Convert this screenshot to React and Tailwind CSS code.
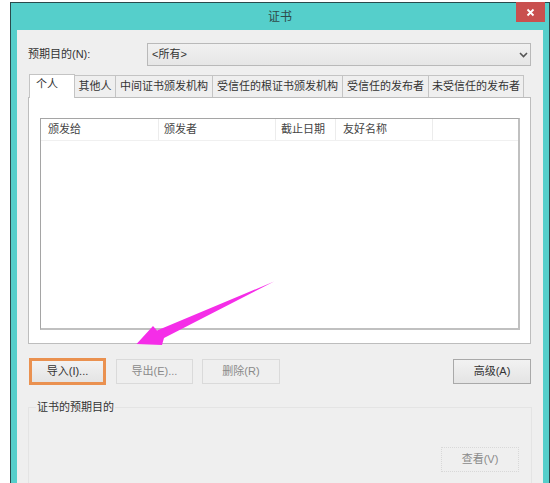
const font = { fontFamily: '"Liberation Sans", "Noto Sans CJK SC", sans-serif' };

const tabs = [
  { label: "其他人", width: "w-[42px]" },
  { label: "中间证书颁发机构", width: "w-[98px]" },
  { label: "受信任的根证书颁发机构", width: "w-[131px]" },
  { label: "受信任的发布者", width: "w-[87px]" },
  { label: "未受信任的发布者", width: "w-[96px]" },
];

const columns = [
  { label: "颁发给", className: "w-[118px] pl-[7px]" },
  { label: "颁发者", className: "w-[117px] pl-[5px]" },
  { label: "截止日期", className: "w-[60px] pl-[5px]" },
  { label: "友好名称", className: "w-[97px] pl-[7px]" },
];

function Button({ children, disabled, className = "" }) {
  return (
    <button
      className={`shrink-0 text-[11px] ${
        disabled ? "bg-[#efefef] text-[#8a8a8a]" : "bg-gradient-to-b from-[#f2f2f2] to-[#e4e4e4] text-[#333333]"
      } ${className}`}
    >
      {children}
    </button>
  );
}

export default function App() {
  return (
    <div className="h-[483px] w-[550px] overflow-hidden bg-white pl-[10px] pt-[2px] text-[#333333]" style={font}>
      <div className="relative h-[481px] w-[540px] border border-b-0 border-[#2a4a4c] bg-[#55cfcb]">
        {/* Title bar */}
        <div className="relative flex h-[27px] items-center justify-center text-[12px] text-[#2f4a4a]">
          证书
          <div className="absolute right-[-1px] top-[-1px] mr-[5px] flex h-[20px] w-[29px] items-center justify-center bg-[#c9504f]">
            <svg width="9" height="9" viewBox="0 0 9 9" fill="none" stroke="white" strokeWidth="1.8">
              <path d="M1.5 1.5l6 6M7.5 1.5l-6 6" />
            </svg>
          </div>
        </div>

        {/* Dialog body */}
        <div className="ml-[6px] h-[460px] w-[526px] bg-[#efefef] pl-[11px] pr-[12px] pt-[13px]">
          <div className="flex h-[23px] items-center">
            <span className="w-[119px] text-[11px]">预期目的(N):</span>
            <div className="flex h-[23px] flex-1 items-center justify-between border border-[#b9b9b9] bg-gradient-to-b from-[#f1f1f1] to-[#e6e6e6] pl-[4px] pr-[2px] text-[11px]">
              &lt;所有&gt;
              <svg width="9" height="6" viewBox="0 0 9 6" fill="none" stroke="#555" strokeWidth="1.6">
                <path d="M1 1l3.5 3.5L8 1" />
              </svg>
            </div>
          </div>

          {/* Tabs */}
          <div className="mt-[9px] flex h-[22px] items-end pl-[1px] text-[11px]">
            <div className="relative z-10 mb-[-1px] h-[24px] w-[46px] border border-b-0 border-[#c4c4c4] bg-white pl-[6px] pt-[1px]">
              个人
            </div>
            {tabs.map((tab) => (
              <div
                key={tab.label}
                className={`${tab.width} ml-[-1px] flex h-[22px] items-center justify-center whitespace-nowrap border border-b-0 border-[#c4c4c4] bg-[#efefef]`}
              >
                {tab.label}
              </div>
            ))}
          </div>

          {/* Tab panel */}
          <div className="h-[247px] w-[503px] border border-[#bdbdbd] bg-white px-[11px] pt-[20px]">
            <div className="h-[212px] w-[480px] border border-b-2 border-r-2 border-[#a5a5a5] border-b-[#c0c0c0] border-r-[#c0c0c0]">
              <div className="flex h-[22px] items-center border-b border-[#f0f0f0] text-[11px] text-[#444444]">
                {columns.map((col) => (
                  <div key={col.label} className={`${col.className} flex h-full items-center border-r border-[#ececec]`}>
                    {col.label}
                  </div>
                ))}
              </div>
            </div>
          </div>

          {/* Action buttons */}
          <div className="mt-[15px] flex items-start">
            <Button className="ml-[1px] mt-[-1px] h-[27px] w-[77px] border-[3px] border-[#ea9150]">导入(I)...</Button>
            <Button disabled className="ml-[10px] h-[25px] w-[77px] border border-[#dadada]">导出(E)...</Button>
            <Button disabled className="ml-[9px] h-[25px] w-[78px] border border-[#dadada]">删除(R)</Button>
            <Button className="ml-auto h-[25px] w-[78px] border border-[#a9a9a9]">高级(A)</Button>
          </div>

          {/* Purposes group */}
          <div className="relative mt-[22px] h-[100px] w-[504px] border border-b-0 border-[#e4e4e4] pt-[39px]">
            <span className="absolute left-[7px] top-[-9px] bg-[#efefef] px-[1px] text-[11px]">证书的预期目的</span>
            <div className="flex justify-end pr-[12px]">
              <Button disabled className="h-[25px] w-[78px] border border-dotted border-[#d8d8d8]">查看(V)</Button>
            </div>
          </div>
        </div>
      </div>

      {/* Annotation arrow */}
      <svg className="absolute left-0 top-0" width="550" height="483" fill="#f52de8">
        <path d="M136.5 344L153 326L157 330.5L274 281.5L164 338L162 345Z" />
      </svg>
    </div>
  );
}
